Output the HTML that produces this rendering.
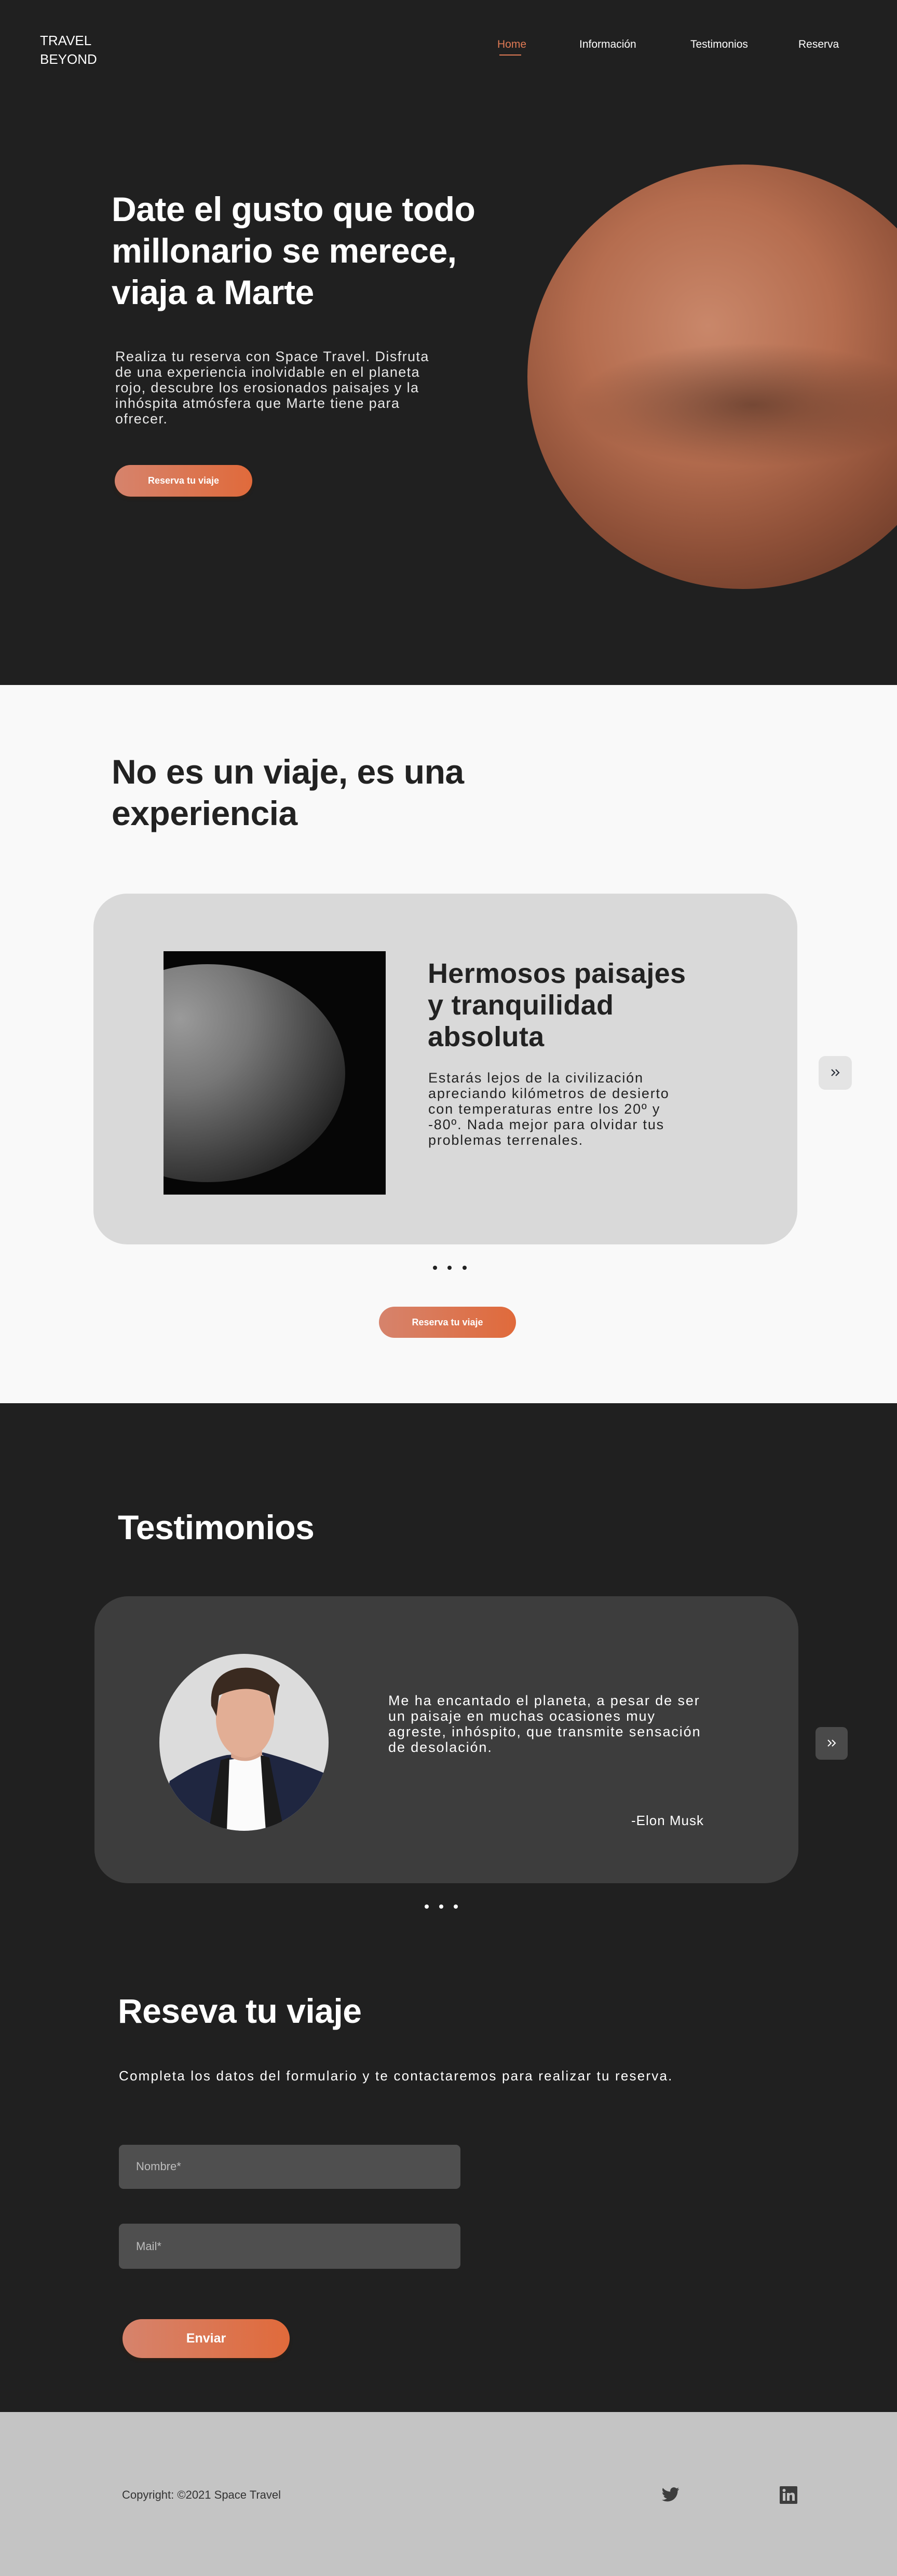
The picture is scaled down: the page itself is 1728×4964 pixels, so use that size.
<!DOCTYPE html>
<html lang="es"><head><meta charset="utf-8"><title>Travel Beyond</title>
<style>
*{margin:0;padding:0;box-sizing:border-box}
html,body{width:1728px;height:4964px;overflow:hidden;font-family:"Liberation Sans",sans-serif}
body{position:relative;background:#202020}
.a{position:absolute}
.hero{left:0;top:0;width:1728px;height:1320px;background:#202020}
.logo{left:77px;top:60px;color:#fff;font-size:26px;line-height:36px}
.nav{top:74px;color:#fff;font-size:21px}
h1,h2{font-weight:700;letter-spacing:-0.5px}
.btn{border-radius:40px;background:linear-gradient(90deg,#d6836c,#e06a3b);color:#fff;font-weight:700;display:flex;align-items:center;justify-content:center;box-shadow:0 4px 6px rgba(60,30,10,.45)}
.s2{left:0;top:1320px;width:1728px;height:1384px;background:#f9f9f9}
.dot{width:8px;height:8px;border-radius:50%}
.foot{left:0;top:4648px;width:1728px;height:316px;background:#c4c4c4}
</style></head><body>
<div class="a hero"></div>
<div class="a logo">TRAVEL<br>BEYOND</div>
<div class="a nav" style="left:958px;color:#e07a55">Home</div>
<div class="a" style="left:962px;top:105px;width:42px;height:2px;background:#e07a55"></div>
<div class="a nav" style="left:1116px">Información</div>
<div class="a nav" style="left:1330px">Testimonios</div>
<div class="a nav" style="left:1538px">Reserva</div>

<h1 class="a" style="left:215px;top:363px;color:#fff;font-size:66px;line-height:80px;width:900px">Date el gusto que todo<br>millonario se merece,<br>viaja a Marte</h1>
<p class="a" style="left:222px;top:672px;color:#e8e8e8;font-size:27px;line-height:30px;letter-spacing:1.4px;width:760px">Realiza tu reserva con Space Travel. Disfruta<br>de una experiencia inolvidable en el planeta<br>rojo, descubre los erosionados paisajes y la<br>inhóspita atmósfera que Marte tiene para<br>ofrecer.</p>
<div class="a btn" style="left:221px;top:896px;width:265px;height:61px;font-size:18px">Reserva tu viaje</div>

<div class="a" style="left:1016px;top:317px;width:830px;height:818px;border-radius:50%;background:radial-gradient(circle at 42% 38%,#c9876a 0%,#b56d4f 35%,#8e5038 62%,#6a3a28 85%,#5a3020 100%)"></div>
<div class="a" style="left:1100px;top:660px;width:700px;height:240px;border-radius:50%;background:radial-gradient(ellipse at 50% 50%,rgba(60,35,25,.55),rgba(60,35,25,0) 70%)"></div>

<div class="a s2"></div>
<h2 class="a" style="left:215px;top:1447px;color:#222;font-size:66px;line-height:80px">No es un viaje, es una<br>experiencia</h2>
<div class="a" style="left:180px;top:1722px;width:1356px;height:676px;border-radius:65px;background:#d9d9d9"></div>
<div class="a" style="left:315px;top:1833px;width:428px;height:469px;background:#060606;overflow:hidden">
<div class="a" style="left:-180px;top:25px;width:530px;height:420px;border-radius:50%;background:radial-gradient(ellipse at 40% 25%,#9a9a9a 0%,#777 30%,#444 60%,#1a1a1a 85%,#080808 100%)"></div></div>
<h2 class="a" style="left:824px;top:1846px;color:#222;font-size:54px;line-height:61px;letter-spacing:0.3px">Hermosos paisajes<br>y tranquilidad<br>absoluta</h2>
<p class="a" style="left:825px;top:2062px;color:#222;font-size:27px;line-height:30px;letter-spacing:1.8px">Estarás lejos de la civilización<br>apreciando kilómetros de desierto<br>con temperaturas entre los 20º y<br>-80º. Nada mejor para olvidar tus<br>problemas terrenales.</p>
<div class="a" style="left:1577px;top:2035px;width:64px;height:65px;border-radius:13px;background:#e4e4e4"></div>
<svg class="a" style="left:1600px;top:2059px" width="20" height="16" viewBox="0 0 20 16"><path d="M2 2l6 6-6 6M10 2l6 6-6 6" fill="none" stroke="#2a2f3a" stroke-width="2.2"/></svg>
<div class="a dot" style="left:834px;top:2439px;background:#222"></div>
<div class="a dot" style="left:862px;top:2439px;background:#222"></div>
<div class="a dot" style="left:891px;top:2439px;background:#222"></div>
<div class="a btn" style="left:730px;top:2518px;width:264px;height:60px;font-size:18px;box-shadow:none">Reserva tu viaje</div>

<h2 class="a" style="left:227px;top:2908px;color:#fff;font-size:66px;line-height:70px">Testimonios</h2>
<div class="a" style="left:182px;top:3076px;width:1356px;height:553px;border-radius:65px;background:#3d3d3d"></div>
<svg class="a" style="left:307px;top:3187px" width="326" height="341" viewBox="0 0 326 341">
<defs><clipPath id="c"><ellipse cx="163" cy="170.5" rx="163" ry="170.5"/></clipPath></defs>
<g clip-path="url(#c)">
<rect width="326" height="341" fill="#dcdcdc"/>
<path d="M20 245 Q80 205 130 195 L200 190 Q260 205 330 235 L330 341 L0 341Z" fill="#1f2640"/>
<path d="M128 205 L200 195 L205 341 L125 341Z" fill="#fbfbfb"/>
<path d="M118 205 L135 200 L130 341 L95 341Z" fill="#1a1a1a"/>
<path d="M195 195 L212 200 L240 341 L205 341Z" fill="#1a1a1a"/>
<path d="M140 150 L195 150 L198 195 Q170 215 138 200Z" fill="#d8a48c"/>
<ellipse cx="165" cy="125" rx="56" ry="75" fill="#e2ae95"/>
<path d="M100 100 Q95 40 150 28 Q200 20 232 60 Q225 80 222 120 L212 80 Q170 55 115 80 L110 120Z" fill="#3a2a20"/>
</g></svg>
<p class="a" style="left:748px;top:3262px;color:#fff;font-size:27px;line-height:30px;letter-spacing:1.9px">Me ha encantado el planeta, a pesar de ser<br>un paisaje en muchas ocasiones muy<br>agreste, inhóspito, que transmite sensación<br>de desolación.</p>
<div class="a" style="left:1150px;top:3493px;width:206px;text-align:right;color:#fff;font-size:26px;letter-spacing:1px">-Elon Musk</div>
<div class="a" style="left:1571px;top:3328px;width:62px;height:63px;border-radius:10px;background:#4a4a4a"></div>
<svg class="a" style="left:1593px;top:3351px" width="20" height="16" viewBox="0 0 20 16"><path d="M2 2l6 6-6 6M10 2l6 6-6 6" fill="none" stroke="#fff" stroke-width="2"/></svg>
<div class="a dot" style="left:818px;top:3670px;background:#fff"></div>
<div class="a dot" style="left:846px;top:3670px;background:#fff"></div>
<div class="a dot" style="left:874px;top:3670px;background:#fff"></div>

<h2 class="a" style="left:227px;top:3840px;color:#fff;font-size:66px;line-height:70px">Reseva tu viaje</h2>
<p class="a" style="left:229px;top:3985px;color:#fff;font-size:26px;line-height:30px;letter-spacing:2.2px">Completa los datos del formulario y te contactaremos para realizar tu reserva.</p>
<div class="a" style="left:229px;top:4133px;width:658px;height:85px;border-radius:9px;background:#4f4f4f"></div>
<div class="a" style="left:262px;top:4162px;color:#bdbdbd;font-size:22px">Nombre*</div>
<div class="a" style="left:229px;top:4285px;width:658px;height:87px;border-radius:9px;background:#4f4f4f"></div>
<div class="a" style="left:262px;top:4316px;color:#bdbdbd;font-size:22px">Mail*</div>
<div class="a btn" style="left:236px;top:4469px;width:322px;height:75px;font-size:25px">Enviar</div>

<div class="a foot"></div>
<div class="a" style="left:235px;top:4795px;color:#333;font-size:22px">Copyright: ©2021 Space Travel</div>
<svg class="a" style="left:1275px;top:4792px" width="34" height="30" viewBox="0 0 24 20"><path d="M23.6 2.4c-.9.4-1.8.6-2.8.8 1-.6 1.8-1.6 2.1-2.7-.9.6-2 1-3.1 1.2A4.9 4.9 0 0 0 11.5 6.1 13.9 13.9 0 0 1 1.4 1a4.9 4.9 0 0 0 1.5 6.5c-.8 0-1.6-.2-2.2-.6 0 2.4 1.700 4.4 3.9 4.8-.7.2-1.5.2-2.2.1.6 2 2.4 3.4 4.6 3.4A9.8 9.8 0 0 1 0 17.2 13.9 13.9 0 0 0 7.5 19.4c9 0 14-7.5 14-14v-.6c1-.7 1.8-1.6 2.1-2.4z" fill="#3d3d3d"/></svg>
<svg class="a" style="left:1502px;top:4791px" width="34" height="34" viewBox="0 0 34 34"><rect width="34" height="34" rx="2" fill="#3d3d3d"/><rect x="6" y="13" width="5" height="15" fill="#c4c4c4"/><circle cx="8.5" cy="8" r="3" fill="#c4c4c4"/><path d="M14 13h5v2c1-1.5 2.5-2.5 5-2.5 3.5 0 5 2 5 6V28h-5v-8.5c0-2-.7-3-2.3-3S19 17.7 19 19.5V28h-5z" fill="#c4c4c4"/></svg>
</body></html>
